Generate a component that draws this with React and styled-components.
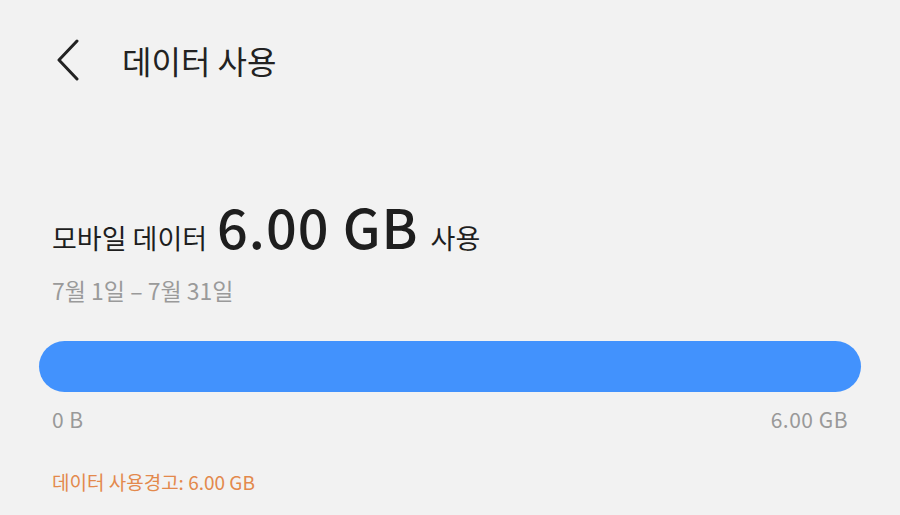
import React from "react";
import styled, { createGlobalStyle } from "styled-components";

const GlobalStyle = createGlobalStyle`
  html, body {
    margin: 0;
    padding: 0;
    background: #f2f2f2;
  }
  body {
    font-family: "Noto Sans CJK KR", "Noto Sans", sans-serif;
    color: #222;
  }
`;

const Page = styled.div`
  width: 900px;
  height: 515px;
  background: #f2f2f2;
  overflow: hidden;
`;

const Header = styled.div`
  display: flex;
  align-items: center;
  height: 124px;
  padding-left: 50px;
`;

const BackButton = styled.button`
  width: 36px;
  height: 48px;
  border: none;
  background: none;
  padding: 0;
  display: flex;
  align-items: center;
  justify-content: center;
  margin-right: 36px;
  margin-top: -4px;
`;

const Title = styled.h1`
  margin: 0;
  font-size: 32px;
  font-weight: 400;
  color: #222;
  margin-top: -4px;
`;

const Section = styled.div`
  padding: 62px 39px 0 39px;
`;

const UsageLine = styled.div`
  display: flex;
  align-items: baseline;
  padding-left: 13px;
  color: #1e1e1e;
`;

const UsageLabel = styled.span`
  font-size: ${(p) => p.size}px;
  margin-right: ${(p) => p.gap || 0}px;
  font-weight: ${(p) => p.weight || 400};
  letter-spacing: ${(p) => p.spacing || 0}px;
`;

const Period = styled.div`
  padding-left: 13px;
  margin-top: 8px;
  font-size: 23px;
  color: #9a9a9a;
`;

const Bar = styled.div`
  margin-top: 34px;
  height: 51px;
  border-radius: 26px;
  background: #4292fd;
`;

const Scale = styled.div`
  display: flex;
  justify-content: space-between;
  padding: 0 13px;
  margin-top: 12px;
  font-size: 21px;
  color: #999;
  letter-spacing: 0.5px;
`;

const Warning = styled.div`
  padding-left: 13px;
  margin-top: 34px;
  font-size: 19px;
  color: #e3894c;
`;

const ChevronLeft = () => (
  <svg width="26" height="42" viewBox="0 0 26 42" fill="none">
    <path
      d="M22 2 L4 21 L22 40"
      stroke="#222"
      strokeWidth="3"
      strokeLinecap="round"
      strokeLinejoin="round"
    />
  </svg>
);

const App = () => {
  return (
    <Page>
      <GlobalStyle />
      <Header>
        <BackButton aria-label="뒤로">
          <ChevronLeft />
        </BackButton>
        <Title>데이터 사용</Title>
      </Header>
      <Section>
        <UsageLine>
          <UsageLabel size={27} gap={10}>모바일 데이터</UsageLabel>
          <UsageLabel size={54} gap={12} weight={500} spacing={1}>6.00 GB</UsageLabel>
          <UsageLabel size={27}>사용</UsageLabel>
        </UsageLine>
        <Period>7월 1일 – 7월 31일</Period>
        <Bar />
        <Scale>
          <span>0 B</span>
          <span>6.00 GB</span>
        </Scale>
        <Warning>데이터 사용경고: 6.00 GB</Warning>
      </Section>
    </Page>
  );
};

export default App;
